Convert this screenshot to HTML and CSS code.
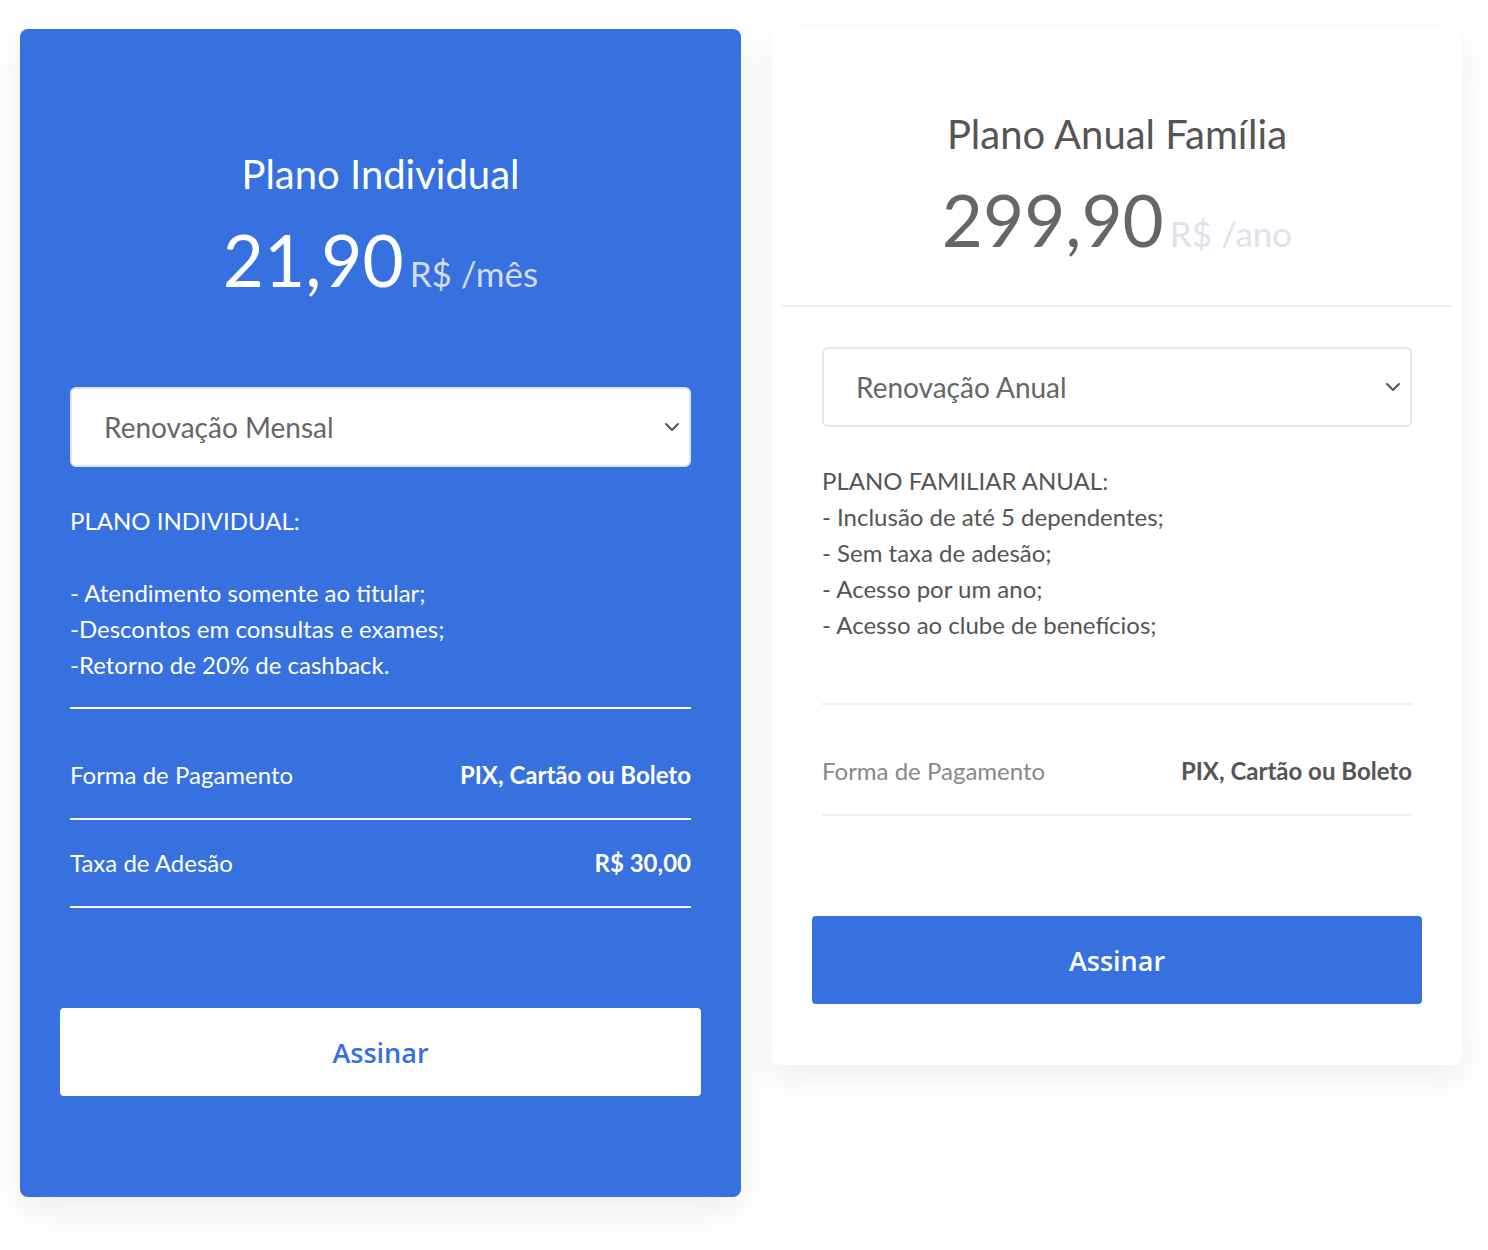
FILE: index.html
```html
<html>
  <head>
    <meta charset="utf-8">
    <link rel="stylesheet" href="styles.css">
    <title>Planos</title>
  </head>
  <body>
    <div class="plans">

      <div class="plan featured">
        <div class="plan-head">
          <h2 class="plan-title">Plano Individual</h2>
          <div class="plan-price">21,90<span class="period">R$ /mês</span></div>
        </div>
        <div class="plan-body">
          <div class="select">
            <span>Renovação Mensal</span>
            <svg width="16" height="10" viewBox="0 0 16 10"><polyline points="2,2 8,8 14,2" fill="none" stroke="currentColor" stroke-width="2" stroke-linecap="round" stroke-linejoin="round"/></svg>
          </div>
          <div class="plan-desc">
            PLANO INDIVIDUAL:<br><br>
            - Atendimento somente ao titular;<br>
            -Descontos em consultas e exames;<br>
            -Retorno de 20% de cashback.
          </div>
          <ul class="plan-info">
            <li><span>Forma de Pagamento</span><b>PIX, Cartão ou Boleto</b></li>
            <li><span>Taxa de Adesão</span><b>R$ 30,00</b></li>
          </ul>
          <button class="btn">Assinar</button>
        </div>
      </div>

      <div class="plan">
        <div class="plan-head">
          <h2 class="plan-title">Plano Anual Família</h2>
          <div class="plan-price">299,90<span class="period">R$ /ano</span></div>
        </div>
        <div class="plan-body">
          <div class="select">
            <span>Renovação Anual</span>
            <svg width="16" height="10" viewBox="0 0 16 10"><polyline points="2,2 8,8 14,2" fill="none" stroke="currentColor" stroke-width="2" stroke-linecap="round" stroke-linejoin="round"/></svg>
          </div>
          <div class="plan-desc">
            PLANO FAMILIAR ANUAL:<br>
            - Inclusão de até 5 dependentes;<br>
            - Sem taxa de adesão;<br>
            - Acesso por um ano;<br>
            - Acesso ao clube de benefícios;<br>
            &nbsp;
          </div>
          <ul class="plan-info">
            <li><span>Forma de Pagamento</span><b>PIX, Cartão ou Boleto</b></li>
          </ul>
          <button class="btn">Assinar</button>
        </div>
      </div>

    </div>
  </body>
</html>
```

FILE: styles.css
```css
body {
	margin: 0;
	background: #fff;
	font-family: Lato, "Noto Sans", sans-serif;
}

.plans {
	display: grid;
	grid-template-columns: 721px 690px;
	gap: 31px;
	align-items: start;
	padding: 29px 0 0 20px;
}

.plan {
	background: #fff;
	border-radius: 8px;
	box-shadow: 0 14px 36px rgba(0, 0, 0, 0.07);
	padding-bottom: 61px;
	color: #555;
}

.plan-head {
	margin: 0 10px;
	padding: 81px 0 43px;
	border-bottom: 2px solid #eee;
	text-align: center;
}

.plan-title {
	margin: 0;
	font-size: 40px;
	font-weight: 400;
	line-height: 1.2;
	color: #555;
}

.plan-price {
	margin-top: 19px;
	font-size: 71px;
	line-height: 1.2;
	color: #666;
}

.period {
	margin-left: 6px;
	font-size: 35px;
	color: #dde2ec;
}

.plan-body {
	padding: 40px 50px 0;
}

.select {
	height: 80px;
	box-sizing: border-box;
	display: flex;
	align-items: center;
	justify-content: space-between;
	padding: 0 9px 0 32px;
	border: 2px solid #e6e6e6;
	border-radius: 6px;
	background: #fff;
	font-size: 28px;
	color: #666;
}

.select svg {
	color: #555;
}

.plan-desc {
	margin-top: 36px;
	padding-bottom: 24px;
	border-bottom: 2px solid #eee;
	font-size: 24px;
	line-height: 36px;
}

.plan-info {
	list-style: none;
	margin: 23px 0 0;
	padding: 0;
}

.plan-info li {
	display: flex;
	justify-content: space-between;
	padding: 25px 0;
	border-bottom: 2px solid #eee;
	font-size: 24px;
	line-height: 36px;
	color: #888;
}

.plan-info b {
	color: #555;
	font-weight: 700;
}

.btn {
	display: block;
	width: calc(100% + 20px);
	height: 88px;
	margin: 100px -10px 0;
	border: none;
	border-radius: 4px;
	background: #3771e0;
	color: #fff;
	font-family: "Open Sans", sans-serif;
	font-size: 27px;
	font-weight: 600;
}

/* featured plan */
.featured {
	background: #3771e0;
	color: #fff;
	padding-bottom: 101px;
}

.featured .plan-head {
	padding-top: 121px;
	border-bottom-color: #3771e0;
}

.featured .plan-title,
.featured .plan-price {
	color: #fff;
}

.featured .period {
	color: #d3dbeb;
}

.featured .select {
	border-color: #dfe4ee;
}

.featured .plan-desc,
.featured .plan-info li {
	border-bottom-color: #fff;
}

.featured .plan-info li,
.featured .plan-info b {
	color: #fff;
}

.featured .btn {
	background: #fff;
	color: #3771e0;
}
```
